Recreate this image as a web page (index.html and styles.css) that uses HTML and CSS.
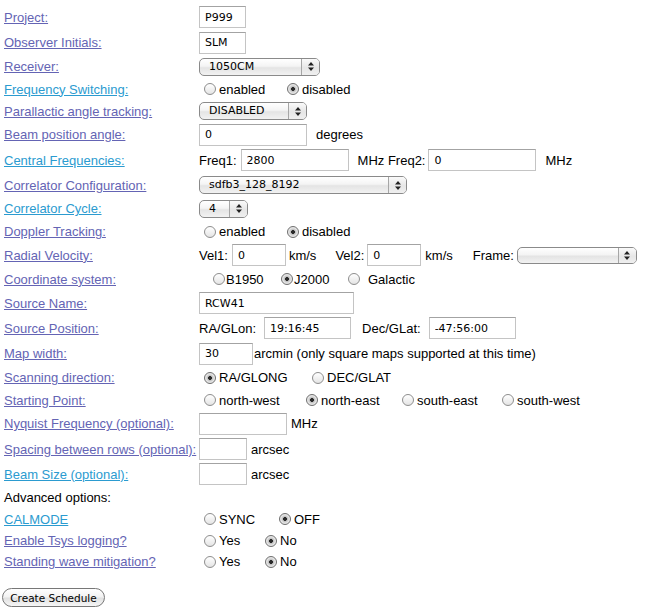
FILE: index.html
```html
<!DOCTYPE html>
<html>
<head>
<meta charset="utf-8">
<title>Schedule</title>
<link rel="stylesheet" href="styles.css">
</head>
<body>
<form class="sched">
<table class="form">
<tr class="h26"><td class="lbl"><a href="#" class="v">Project:</a></td><td><div class="line"><input class="txt w47" value="P999"></div></td></tr>
<tr class="h25"><td class="lbl"><a href="#" class="v">Observer Initials:</a></td><td><div class="line"><input class="txt w47" value="SLM"></div></td></tr>
<tr class="h23"><td class="lbl"><a href="#" class="v">Receiver:</a></td><td><div class="line"><span class="sel w121"><span class="val">1050CM</span><span class="arr"><svg width="6" height="9" viewBox="0 0 6 9"><path d="M3 0L6 3.5H0z M3 9L6 5.5H0z" fill="#222"/></svg></span></span></div></td></tr>
<tr class="h22"><td class="lbl"><a href="#" class="c">Frequency Switching:</a></td><td><div class="line"><label class="opt o83"><input type="radio" class="rad" name="fs">enabled</label><label class="opt"><input type="radio" class="rad" name="fs" checked>disabled</label></div></td></tr>
<tr class="h22"><td class="lbl"><a href="#" class="v">Parallactic angle tracking:</a></td><td><div class="line"><span class="sel w108"><span class="val">DISABLED</span><span class="arr"><svg width="6" height="9" viewBox="0 0 6 9"><path d="M3 0L6 3.5H0z M3 9L6 5.5H0z" fill="#222"/></svg></span></span></div></td></tr>
<tr class="h25"><td class="lbl"><a href="#" class="v">Beam position angle:</a></td><td><div class="line"><input class="txt w108" value="0"><span class="ml9">degrees</span></div></td></tr>
<tr class="h26"><td class="lbl"><a href="#" class="c">Central Frequencies:</a></td><td><div class="line"><span>Freq1:</span><input class="txt w108 ml4" value="2800"><span class="ml9">MHz Freq2:</span><input class="txt w108 ml3" value="0"><span class="ml9">MHz</span></div></td></tr>
<tr class="h24"><td class="lbl"><a href="#" class="v">Correlator Configuration:</a></td><td><div class="line"><span class="sel w208"><span class="val">sdfb3_128_8192</span><span class="arr"><svg width="6" height="9" viewBox="0 0 6 9"><path d="M3 0L6 3.5H0z M3 9L6 5.5H0z" fill="#222"/></svg></span></span></div></td></tr>
<tr class="h23"><td class="lbl"><a href="#" class="c">Correlator Cycle:</a></td><td><div class="line"><span class="sel w49"><span class="val">4</span><span class="arr"><svg width="6" height="9" viewBox="0 0 6 9"><path d="M3 0L6 3.5H0z M3 9L6 5.5H0z" fill="#222"/></svg></span></span></div></td></tr>
<tr class="h23"><td class="lbl"><a href="#" class="v">Doppler Tracking:</a></td><td><div class="line"><label class="opt o83"><input type="radio" class="rad" name="dt">enabled</label><label class="opt"><input type="radio" class="rad" name="dt" checked>disabled</label></div></td></tr>
<tr class="h24"><td class="lbl"><a href="#" class="v">Radial Velocity:</a></td><td><div class="line"><span>Vel1:</span><input class="txt w54 ml4" value="0"><span class="ml3">km/s</span><span class="ml19">Vel2:</span><input class="txt w54 ml3" value="0"><span class="ml4">km/s</span><span class="ml20">Frame:</span><span class="sel w120 ml3 short"><span class="val"></span><span class="arr"><svg width="6" height="9" viewBox="0 0 6 9"><path d="M3 0L6 3.5H0z M3 9L6 5.5H0z" fill="#222"/></svg></span></span></div></td></tr>
<tr class="h24"><td class="lbl"><a href="#" class="v">Coordinate system:</a></td><td><div class="line coord"><label class="opt o68 tight"><input type="radio" class="rad" name="cs">B1950</label><label class="opt o67 tight"><input type="radio" class="rad" name="cs" checked>J2000</label><label class="opt wide"><input type="radio" class="rad" name="cs">Galactic</label></div></td></tr>
<tr class="h24"><td class="lbl"><a href="#" class="v">Source Name:</a></td><td><div class="line"><input class="txt w155" value="RCW41"></div></td></tr>
<tr class="h26"><td class="lbl"><a href="#" class="v">Source Position:</a></td><td><div class="line"><span>RA/GLon:</span><input class="txt w87 ml8" value="19:16:45"><span class="ml11">Dec/GLat:</span><input class="txt w87 ml8" value="-47:56:00"></div></td></tr>
<tr class="h25"><td class="lbl"><a href="#" class="v">Map width:</a></td><td><div class="line"><input class="txt w54" value="30"><span class="ml1">arcmin (only square maps supported at this time)</span></div></td></tr>
<tr class="h23"><td class="lbl"><a href="#" class="v">Scanning direction:</a></td><td><div class="line"><label class="opt o108"><input type="radio" class="rad" name="sd" checked>RA/GLONG</label><label class="opt"><input type="radio" class="rad" name="sd">DEC/GLAT</label></div></td></tr>
<tr class="h22"><td class="lbl"><a href="#" class="v">Starting Point:</a></td><td><div class="line"><label class="opt o102"><input type="radio" class="rad" name="sp">north-west</label><label class="opt o96"><input type="radio" class="rad" name="sp" checked>north-east</label><label class="opt o100"><input type="radio" class="rad" name="sp">south-east</label><label class="opt"><input type="radio" class="rad" name="sp">south-west</label></div></td></tr>
<tr class="h25"><td class="lbl"><a href="#" class="v">Nyquist Frequency (optional):</a></td><td><div class="line"><input class="txt w88" value=""><span class="ml4">MHz</span></div></td></tr>
<tr class="h26"><td class="lbl"><a href="#" class="v">Spacing between rows (optional):</a></td><td><div class="line"><input class="txt w48" value=""><span class="ml4">arcsec</span></div></td></tr>
<tr class="h24"><td class="lbl"><a href="#" class="c">Beam Size (optional):</a></td><td><div class="line"><input class="txt w48" value=""><span class="ml4">arcsec</span></div></td></tr>
<tr class="h22"><td class="lbl">Advanced options:</td><td></td></tr>
<tr class="h22"><td class="lbl"><a href="#" class="c">CALMODE</a></td><td><div class="line"><label class="opt o75"><input type="radio" class="rad" name="cm">SYNC</label><label class="opt"><input type="radio" class="rad" name="cm" checked>OFF</label></div></td></tr>
<tr class="h21"><td class="lbl"><a href="#" class="v">Enable Tsys logging?</a></td><td><div class="line"><label class="opt o61"><input type="radio" class="rad" name="ts">Yes</label><label class="opt"><input type="radio" class="rad" name="ts" checked>No</label></div></td></tr>
<tr class="h21"><td class="lbl"><a href="#" class="v">Standing wave mitigation?</a></td><td><div class="line"><label class="opt o61"><input type="radio" class="rad" name="sw">Yes</label><label class="opt"><input type="radio" class="rad" name="sw" checked>No</label></div></td></tr>
</table>
<div class="actions"><button type="button" class="btn">Create Schedule</button></div>
</form>
</body>
</html>
```
FILE: styles.css
```css
body {
  margin: 0;
  background: #fff;
  color: #000;
  font-family: "Liberation Sans", Arial, sans-serif;
  font-size: 13px;
}
.sched { margin: 0; }
.form {
  border-collapse: collapse;
  margin: 4px 0 0 4px;
}
.form td {
  padding: 0;
  vertical-align: middle;
  white-space: nowrap;
}
.lbl { width: 195px; }
a.v { color: #6464b4; }
a.c { color: #2b9bd0; }

.h21 { height: 21px; }
.h22 { height: 22px; }
.h23 { height: 23px; }
.h24 { height: 24px; }
.h25 { height: 25px; }
.h26 { height: 26px; }

.line {
  display: flex;
  align-items: center;
}

.txt {
  box-sizing: border-box;
  height: 22px;
  margin: 0;
  padding: 0 0 0 5px;
  border: 1px solid #c4c4c4;
  border-top-color: #a3a3a3;
  background: #fff;
  color: #000;
  font: 11px "DejaVu Sans", sans-serif;
  outline: none;
}
.w47 { width: 47px; }
.w48 { width: 48px; }
.w54 { width: 54px; }
.w87 { width: 87px; }
.w88 { width: 88px; }
.w108 { width: 108px; }
.w155 { width: 155px; }

.ml1 { margin-left: 1px; }
.ml3 { margin-left: 3px; }
.ml4 { margin-left: 4px; }
.ml8 { margin-left: 8px; }
.ml9 { margin-left: 9px; }
.ml11 { margin-left: 11px; }
.ml19 { margin-left: 19px; }
.ml20 { margin-left: 20px; }

.sel {
  box-sizing: border-box;
  display: inline-flex;
  align-items: stretch;
  height: 18px;
  border: 1px solid #8a8a8a;
  border-radius: 5px;
  background: linear-gradient(#ffffff, #f4f4f4 45%, #e4e4e4 55%, #f2f2f2);
  font: 11px "DejaVu Sans", sans-serif;
  overflow: hidden;
}
.sel.short { height: 17px; }
.sel .val {
  flex: 1;
  padding-left: 9px;
  line-height: 16px;
}
.sel .arr {
  width: 17px;
  border-left: 1px solid #a6a6a6;
  display: flex;
  align-items: center;
  justify-content: center;
  background: linear-gradient(#fafafa, #e6e6e6 55%, #efefef);
}
.w49 { width: 49px; }
.w120 { width: 120px; }
.w121 { width: 121px; }
.w208 { width: 208px; }

.opt {
  display: inline-flex;
  align-items: center;
  flex: none;
}
.rad {
  -webkit-appearance: none;
  appearance: none;
  box-sizing: border-box;
  width: 12px;
  height: 12px;
  margin: 0 3px 0 5px;
  border-radius: 50%;
  border: 1px solid #8e8e8e;
  background: linear-gradient(#ffffff, #e4e4e4);
  flex: none;
}
.rad:checked {
  border-color: #6f6f6f;
  background: radial-gradient(circle, #2a2a2a 0 1.6px, #bdbdbd 2.2px, #e2e2e2 4px, #f4f4f4 6px);
}
.coord { padding-left: 9px; }
.tight .rad { margin-right: 1px; }
.wide .rad { margin-right: 8px; }
.o61 { width: 61px; }
.o67 { width: 67px; }
.o68 { width: 68px; }
.o75 { width: 75px; }
.o83 { width: 83px; }
.o96 { width: 96px; }
.o100 { width: 100px; }
.o102 { width: 102px; }
.o108 { width: 108px; }

.actions { margin: 16px 0 0 2px; }
.btn {
  box-sizing: border-box;
  width: 103px;
  height: 19px;
  margin: 0;
  padding: 0;
  border: 1px solid #777;
  border-radius: 10px;
  background: linear-gradient(#ffffff, #f2f2f2 48%, #e0e0e0 52%, #f6f6f6);
  color: #000;
  font: 10.5px "DejaVu Sans", sans-serif;
}
```
